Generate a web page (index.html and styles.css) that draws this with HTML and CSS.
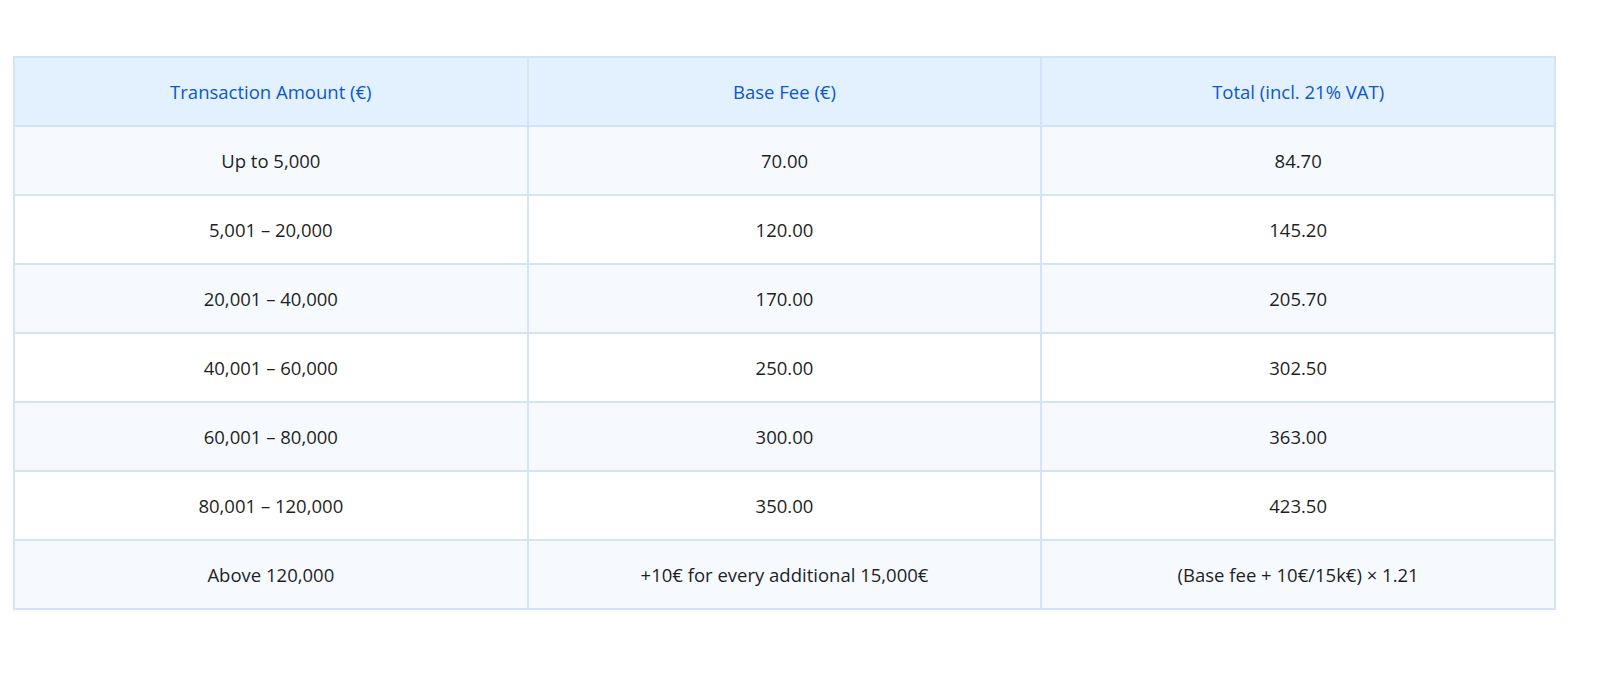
FILE: index.html
```html
<!DOCTYPE html>
<html>
<head>
<meta charset="utf-8">
<link rel="stylesheet" href="styles.css">
</head>
<body>
<div class="wrap">
<table class="fees">
<thead>
<tr><th>Transaction Amount (€)</th><th>Base Fee (€)</th><th>Total (incl. 21% VAT)</th></tr>
</thead>
<tbody>
<tr><td>Up to 5,000</td><td>70.00</td><td>84.70</td></tr>
<tr><td>5,001 – 20,000</td><td>120.00</td><td>145.20</td></tr>
<tr><td>20,001 – 40,000</td><td>170.00</td><td>205.70</td></tr>
<tr><td>40,001 – 60,000</td><td>250.00</td><td>302.50</td></tr>
<tr><td>60,001 – 80,000</td><td>300.00</td><td>363.00</td></tr>
<tr><td>80,001 – 120,000</td><td>350.00</td><td>423.50</td></tr>
<tr><td>Above 120,000</td><td>+10€ for every additional 15,000€</td><td>(Base fee + 10€/15k€) × 1.21</td></tr>
</tbody>
</table>
</div>
</body>
</html>
```
FILE: styles.css
```css
html, body { margin: 0; padding: 0; background: #fff; }
.wrap { padding: 56px 44px 0 13px; }
.fees {
  width: 100%;
  border-collapse: collapse;
  table-layout: fixed;
  font-family: "Open Sans", "Liberation Sans", sans-serif;
  font-size: 18.5px;
  color: #1f1f1f;
}
.fees th, .fees td {
  border: 2px solid #d3e3f8;
  height: 67px;
  padding: 0 8px;
  text-align: center;
  vertical-align: middle;
}
.fees th {
  background: #e3f0fd;
  color: #0b57d0;
  font-weight: 400;
}
.fees tbody tr:nth-child(odd) td { background: #f6faff; }
.fees tbody tr:nth-child(even) td { background: #ffffff; }
```
